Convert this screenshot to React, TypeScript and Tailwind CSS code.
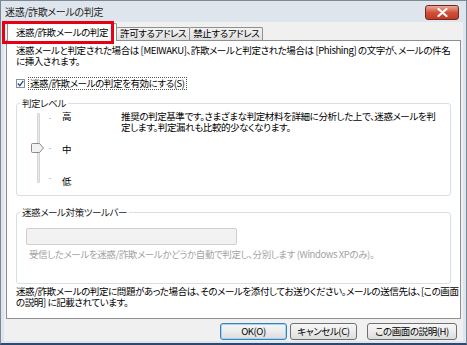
import React from 'react';

const FONT = {
  fontFamily: '"Noto Sans CJK JP", "Liberation Sans", sans-serif',
  fontFeatureSettings: '"palt"',
};

const CloseButton: React.FC = () => (
  <div className="w-[34px] h-[15px] rounded-[3px] border border-[#6b2a22] bg-gradient-to-b from-[#e9a99a] via-[#d0503a] to-[#c23a22] flex items-center justify-center">
    <svg width="11" height="9" viewBox="0 0 11 9">
      <path d="M1.5 1 L9.5 8 M9.5 1 L1.5 8" stroke="#ffffff" strokeWidth="2.2" strokeLinecap="round" />
    </svg>
  </div>
);

const Tab: React.FC<{ label: string; active?: boolean }> = ({ label, active }) => (
  <div
    className={
      active
        ? 'relative z-10 h-[18px] px-[8px] flex items-center bg-white border border-b-0 border-[#8e8f8f] rounded-t-[2px] -mb-px'
        : 'h-[13px] px-[3px] flex items-center bg-gradient-to-b from-[#f2f2f2] to-[#e0e0e0] border border-b-0 border-[#8e8f8f] rounded-t-[2px] -ml-px'
    }
  >
    <span className="text-[9.5px] tracking-[-0.4px] leading-none text-black whitespace-nowrap">{label}</span>
  </div>
);

const GroupBox: React.FC<{ label: string; className?: string; children: React.ReactNode }> = ({
  label,
  className = '',
  children,
}) => (
  <div className={`relative border border-[#d5dfe5] rounded-[3px] ${className}`}>
    <span className="absolute -top-[7px] left-[3px] px-[2px] bg-white text-[9.5px] tracking-[-0.4px] leading-[12px] text-[#1a1a1a]">
      {label}
    </span>
    {children}
  </div>
);

const Button: React.FC<{ label: string; primary?: boolean; className?: string }> = ({ label, primary, className = '' }) => (
  <div
    className={`h-[17px] flex items-center justify-center rounded-[3px] border bg-gradient-to-b from-[#f6f6f6] via-[#ececec] to-[#dcdcdc] text-[9.5px] tracking-[-0.4px] leading-none text-black ${
      primary ? 'border-[#3c7fb1] shadow-[inset_0_0_0_1px_#9fd5f6]' : 'border-[#707070]'
    } ${className}`}
  >
    {label}
  </div>
);

const LevelSlider: React.FC = () => (
  <div className="relative w-[30px] h-[70px] shrink-0">
    {/* track */}
    <div className="absolute left-[8px] top-0 bottom-0 w-[3px] border border-[#d6d6d6] bg-[#e7eaea] rounded-[1px]" />
    {/* ticks */}
    <div className="absolute left-[20px] top-[5px] w-[2px] h-px bg-[#c4c4c4]" />
    <div className="absolute left-[20px] top-[35px] w-[2px] h-px bg-[#c4c4c4]" />
    <div className="absolute left-[20px] top-[65px] w-[2px] h-px bg-[#c4c4c4]" />
    {/* thumb */}
    <svg className="absolute left-[2px] top-[30px]" width="13" height="10" viewBox="0 0 13 10">
      <path d="M0.5 1.5 Q0.5 0.5 1.5 0.5 H8.5 L12.5 5 L8.5 9.5 H1.5 Q0.5 9.5 0.5 8.5 Z" fill="#f2f2f2" stroke="#8a8a8a" />
    </svg>
  </div>
);

const TXT = 'text-[9.5px] tracking-[-0.4px] leading-[11px] whitespace-nowrap';

export default function App() {
  return (
    <div
      className="w-[467px] h-[345px] overflow-hidden flex flex-col bg-[#dfe5ec] border border-[#7c8896] border-b-2 border-b-[#2a4a74]"
      style={FONT}
    >
      {/* Title bar */}
      <div className="h-[21px] shrink-0 flex items-center justify-between pl-[4px] pr-[7px] pt-[1px]">
        <span className="text-[10px] tracking-[-0.3px] leading-none text-[#222]">迷惑/詐欺メールの判定</span>
        <CloseButton />
      </div>

      {/* Client area */}
      <div className="flex-1 mx-[3px] mb-[2px] bg-[#f0f0f0] flex flex-col px-[2px] pt-[1px]">
        {/* Tabs */}
        <div className="relative flex items-end pl-[1px] h-[17px]">
          <Tab label="迷惑/詐欺メールの判定" active />
          <Tab label="許可するアドレス" />
          <Tab label="禁止するアドレス" />
          {/* annotation box */}
          <div className="absolute -left-[4px] -top-[2px] w-[112px] h-[23px] border-[3px] border-[#e60012] z-20" />
        </div>

        {/* Tab panel */}
        <div className="h-[279px] shrink-0 bg-white border border-[#8e8f8f] flex flex-col px-[9px] pt-[4px]">
          <p className={`${TXT} text-black`}>
            迷惑メールと判定された場合は [MEIWAKU]、詐欺メールと判定された場合は [Phishing] の文字が、メールの件名
            <br />
            に挿入されます。
          </p>

          {/* checkbox */}
          <div className="mt-[10px] flex items-center gap-[3px]">
            <div className="w-[9px] h-[9px] border border-[#8e8f8f] bg-white flex items-center justify-center">
              <svg width="7" height="7" viewBox="0 0 7 7">
                <path d="M0.8 3.6 L2.8 5.6 L6.3 0.8" stroke="#2b4fa0" strokeWidth="1.4" fill="none" />
              </svg>
            </div>
            <span className={`${TXT} text-black border border-dotted border-[#555] px-px`}>
              迷惑/詐欺メールの判定を有効にする(S)
            </span>
          </div>

          {/* Group: level */}
          <GroupBox label="判定レベル" className="mt-[13px] h-[93px] shrink-0">
            <div className="flex pt-[9px] pl-[12px]">
              <LevelSlider />
              <div className={`ml-[3px] -mt-[2px] h-[76px] flex flex-col justify-between ${TXT} text-black`}>
                <span>高</span>
                <span>中</span>
                <span>低</span>
              </div>
              <p className={`ml-[50px] -mt-[2px] ${TXT} text-black`}>
                推奨の判定基準です。さまざまな判定材料を詳細に分析した上で、迷惑メールを判
                <br />
                定します。判定漏れも比較的少なくなります。
              </p>
            </div>
          </GroupBox>

          {/* Group: toolbar */}
          <GroupBox label="迷惑メール対策ツールバー" className="mt-[16px] h-[72px] shrink-0">
            <div className="pt-[15px] pl-[9px]">
              <div className="w-[211px] h-[17px] rounded-[2px] border border-[#cfcfcf] bg-[#f2f2f2]" />
              <p className={`mt-[4px] pl-[3px] ${TXT} text-[#a3a3a3]`}>
                受信したメールを迷惑/詐欺メールかどうか自動で判定し、分別します (Windows XPのみ)。
              </p>
            </div>
          </GroupBox>

          <p className={`mt-[2px] ${TXT} text-black`}>
            迷惑/詐欺メールの判定に問題があった場合は、そのメールを添付してお送りください。メールの送信先は、[この画面
            <br />
            の説明] に記載されています。
          </p>
        </div>

        {/* Buttons */}
        <div className="mt-[4px] flex justify-end pr-[4px]">
          <Button label="OK(O)" primary className="w-[67px]" />
          <Button label="キャンセル(C)" className="ml-[3px] w-[67px]" />
          <Button label="この画面の説明(H)" className="ml-[10px] w-[90px]" />
        </div>
      </div>
    </div>
  );
}
